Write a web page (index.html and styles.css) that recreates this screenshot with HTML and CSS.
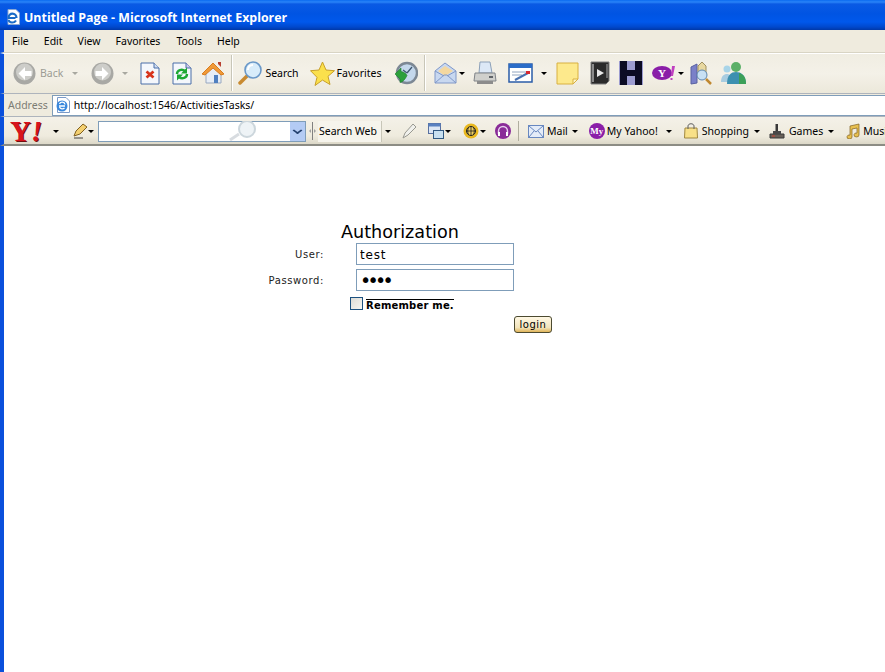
FILE: index.html
```html
<!DOCTYPE html>
<html>
<head>
    <meta charset="utf-8">
    <title>Untitled Page - Microsoft Internet Explorer</title>
    <link rel="stylesheet" href="styles.css">
</head>
<body>
<div class="window">
    <div class="titlebar">
        <svg class="title-icon" width="16" height="16" viewBox="0 0 16 16"><path d="M3 .5h8l3.500 3.500v11.500H3z" fill="#fff" stroke="#8aa8d4"/><path d="M2.500 9h8M3.500 9c0-6 8-5.500 8 0M11 11.500c-2 3-6.500 2.500-7.500-.5" fill="none" stroke="#1a6cc8" stroke-width="2.200"/></svg>
        <span class="title-text">Untitled Page - Microsoft Internet Explorer</span>
    </div>

    <div class="menubar">
        <span class="menu-file">File</span>
        <span class="menu-edit">Edit</span>
        <span class="menu-view">View</span>
        <span class="menu-favorites">Favorites</span>
        <span class="menu-tools">Tools</span>
        <span class="menu-help">Help</span>
    </div>

    <div class="toolbar">
        <svg class="tb-back" width="23" height="23" viewBox="0 0 23 23"><circle cx="11.500" cy="11.500" r="11" fill="#a8a8a4"/><circle cx="11.500" cy="10" r="8.500" fill="#cdcdc9"/><path d="M12 5l-6.500 6.500L12 18v-4h6.500V9H12z" fill="#fff"/></svg>
        <span class="tb-label tb-label-off">Back</span>
        <span class="arrow arrow-off tb-back-arrow"></span>
        <svg class="tb-forward" width="23" height="23" viewBox="0 0 23 23"><circle cx="11.500" cy="11.500" r="11" fill="#a8a8a4"/><circle cx="11.500" cy="10" r="8.500" fill="#cdcdc9"/><path d="M11 5l6.500 6.500L11 18v-4H4.500V9H11z" fill="#fff"/></svg>
        <span class="arrow arrow-off tb-forward-arrow"></span>
        <svg class="tb-stop" width="20" height="23" viewBox="0 0 20 23"><path d="M1 1h13l5 5v16H1z" fill="#f4f7fc" stroke="#4a6fa8"/><path d="M14 1v5h5" fill="#cfdcf0" stroke="#4a6fa8"/><path d="M6.500 9.500l7 6M13.500 9.500l-7 6" stroke="#d8341c" stroke-width="2.800"/></svg>
        <svg class="tb-refresh" width="20" height="23" viewBox="0 0 20 23"><path d="M1 1h13l5 5v16H1z" fill="#f4f7fc" stroke="#4a6fa8"/><path d="M14 1v5h5" fill="#d0c8ec" stroke="#4a6fa8"/><path d="M5 12c0-4 5-5.500 8-3" fill="none" stroke="#1fa834" stroke-width="2.400"/><path d="M15 5.500v6h-6z" fill="#1fa834"/><path d="M15 12c0 4-5 5.500-8 3" fill="none" stroke="#1fa834" stroke-width="2.400"/><path d="M5 18.500v-6h6z" fill="#1fa834"/></svg>
        <svg class="tb-home" width="24" height="24" viewBox="0 0 24 24"><path d="M5 11v11h15V11l-7-7z" fill="#e8eef6" stroke="#98a8c0"/><path d="M1 13L12 2l11 11-3 1-8-7-8 7z" fill="#f09a38" stroke="#d87c20"/><path d="M17 1h3v5l-3-3z" fill="#b84030"/><rect x="13" y="14" width="4" height="8" fill="#5080c0"/></svg>
        <span class="tb-sep tb-sep-a"></span>
        <svg class="tb-search" width="25" height="24" viewBox="0 0 25 24"><path d="M2 22l8-8" stroke="#c88a30" stroke-width="3.500" stroke-linecap="round"/><circle cx="15" cy="9" r="8" fill="#d8ecfa" stroke="#6a98c8" stroke-width="1.600"/><path d="M10 9c0-3 2-5 5-5" fill="none" stroke="#fff" stroke-width="2"/></svg>
        <span class="tb-label tb-search-label">Search</span>
        <svg class="tb-star" width="25" height="25" viewBox="0 0 25 25"><path d="M12.500 1l3.500 8 8.500.7-6.500 5.600 2 8.200-7.500-4.400L5 24.500l2-8.200L.5 9.700 9 9z" fill="#fbe04c" stroke="#c8a028"/></svg>
        <span class="tb-label tb-favorites-label">Favorites</span>
        <svg class="tb-history" width="24" height="24" viewBox="0 0 24 24"><circle cx="13" cy="12" r="10" fill="#c4d8ec" stroke="#7c8894" stroke-width="2.400"/><path d="M13 12l5-6M13 12l-4-3" stroke="#405870" stroke-width="1.300"/><path d="M1 13l6-6v3.500c3 .5 5 2 6 4-2 4-4 6.500-7 7v-3.500z" fill="#2ca03c" stroke="#1c7c2c" stroke-width=".6"/></svg>
        <span class="tb-sep tb-sep-b"></span>
        <svg class="tb-mail" width="23" height="24" viewBox="0 0 23 24"><path d="M1 10L11 2l11 8v12H1z" fill="#c8d8f0" stroke="#8098c8"/><path d="M4 10l7-5 8 5-8 5z" fill="#f4d8a0"/><path d="M1 22l9-8h3l9 8M1 10l9 5M22 10l-9 5" fill="none" stroke="#8098c8"/></svg>
        <span class="arrow tb-mail-arrow"></span>
        <svg class="tb-print" width="24" height="24" viewBox="0 0 24 24"><path d="M7 1h10l2 11H6z" fill="#dce8f6" stroke="#8ca0b8"/><path d="M2 12h20l1 8H1z" fill="#d0d0cc" stroke="#808488"/><path d="M4 20h16v3H4z" fill="#8c8c8c"/><rect x="16" y="15" width="4" height="2" fill="#606468"/></svg>
        <svg class="tb-edit" width="25" height="20" viewBox="0 0 25 20"><rect x="1" y="1" width="23" height="18" fill="#fff" stroke="#2a5ca8" stroke-width="1.500"/><rect x="1" y="1" width="23" height="4" fill="#2a6cc8"/><path d="M4 9h14M4 12h10" stroke="#90a4c0"/><path d="M7 17l13-7" stroke="#4870b0" stroke-width="2"/><rect x="18" y="8" width="4" height="3" fill="#d82830"/></svg>
        <span class="arrow tb-edit-arrow"></span>
        <svg class="tb-note" width="23" height="23" viewBox="0 0 23 23"><path d="M1 1h21v16l-5 5H1z" fill="#fde98c" stroke="#d8b040"/><path d="M17 22v-5h5z" fill="#fff6c8" stroke="#d8b040"/></svg>
        <svg class="tb-film" width="20" height="24" viewBox="0 0 20 24"><path d="M1 1h18v19l-3 3H1z" fill="#2a2a2a" stroke="#808080"/><rect x="2" y="3" width="2" height="18" fill="#8a8a8a"/><rect x="16" y="3" width="2" height="14" fill="#6a6a6a"/><path d="M7 8l7 4-7 4z" fill="#e8e8e8"/></svg>
        <svg class="tb-h" width="24" height="24" viewBox="0 0 24 24"><rect width="24" height="24" fill="#9c9cd0"/><path d="M1 0h7v9h8V0h7v24h-7v-9H8v9H1z" fill="#0c0c24"/></svg>
        <svg class="tb-yahoo" width="24" height="16" viewBox="0 0 24 16"><ellipse cx="10" cy="8" rx="10" ry="7" fill="#8a1ea8"/><text x="10" y="12" class="yahoo-y">Y</text><path d="M20 1h3l-2 10h-2zM18.500 13h2v2h-2z" fill="#c040c0"/></svg>
        <span class="arrow tb-yahoo-arrow"></span>
        <svg class="tb-research" width="22" height="24" viewBox="0 0 22 24"><path d="M1 6l6-3v19l-6 1z" fill="#7a80c8" stroke="#5860a0"/><path d="M8 5l4-4 4 4v10H8z" fill="#e8d8a0" stroke="#a09060"/><circle cx="12" cy="14" r="5" fill="#c8e0f4" stroke="#6088b0"/><path d="M16 18l5 5" stroke="#c08830" stroke-width="2.500"/></svg>
        <svg class="tb-messenger" width="25" height="24" viewBox="0 0 25 24"><circle cx="6" cy="8" r="3.500" fill="#a8d4e8"/><path d="M0 21c0-6 3-8 6-8s4 2 5 8z" fill="#a8cce0"/><circle cx="15" cy="6" r="5" fill="#5cb068"/><path d="M6 23c0-9 4-12 9-12s10 3 10 12z" fill="#3c90b0"/><path d="M18 12c4 1 7 4 7 11h-7z" fill="#3ca058"/></svg>
    </div>

    <div class="addressbar">
        <span class="address-label">Address</span>
        <div class="address-box">
            <svg class="address-icon" width="16" height="16" viewBox="0 0 16 16"><path d="M2.500 .5h8.500l3.500 3.500v11.500h-12z" fill="#fff" stroke="#7a9ac8"/><circle cx="7" cy="9" r="5.500" fill="#3a88dc"/><path d="M4 9h6M4.500 7c1-2.500 5-2.500 5.500.5M9.500 11c-1.500 1.500-4 1.200-5-1" fill="none" stroke="#fff" stroke-width="1.300"/></svg>
            <span class="address-url">http://localhost:1546/ActivitiesTasks/</span>
        </div>
    </div>

    <div class="yahoobar">
        <span class="yahoo-logo">Y<i class="yahoo-bang">!</i></span>
        <span class="arrow yb-logo-arrow"></span>
        <svg class="yb-pencil" width="15" height="16" viewBox="0 0 15 16"><path d="M1 13l2-5 7-7 4 3-7 7z" fill="#f4d070" stroke="#806020"/><path d="M1 15h9" stroke="#404040"/></svg>
        <span class="arrow yb-pencil-arrow"></span>
        <div class="search-box">
            <svg class="search-glass" width="28" height="20" viewBox="0 0 28 20"><path d="M1 19l9-6" stroke="#d8dce0" stroke-width="3"/><circle cx="18" cy="8" r="8" fill="#eef3f6" stroke="#ccd6dc" stroke-width="2"/></svg>
            <span class="search-drop"></span>
        </div>
        <svg class="yb-grip" width="7" height="20" viewBox="0 0 7 20"><path d="M3.500 1v18" stroke="#808080"/><path d="M2 8l-2 2 2 2zM5 8l2 2-2 2z" fill="#a0a0a0"/></svg>
        <span class="search-web">Search Web</span>
        <span class="arrow yb-web-arrow"></span>
        <svg class="yb-pen" width="15" height="16" viewBox="0 0 15 16"><path d="M1 15l2-5 8-9 3 3-8 8z" fill="#f0f0ec" stroke="#989890"/></svg>
        <svg class="yb-window" width="16" height="16" viewBox="0 0 16 16"><rect x="0.500" y="0.500" width="12" height="10" fill="#dce6f4" stroke="#5870a0"/><rect x="0.500" y="0.500" width="12" height="3" fill="#5880c0"/><rect x="5.500" y="7.500" width="10" height="8" fill="#c8e0f0" stroke="#305880"/></svg>
        <span class="arrow yb-window-arrow"></span>
        <svg class="yb-globe" width="16" height="16" viewBox="0 0 16 16"><circle cx="8" cy="8" r="7.500" fill="#e8b820"/><circle cx="8" cy="8" r="4.500" fill="#f0d060" stroke="#202020"/><path d="M3.500 8h9M8 3.500v9M5.500 4.500c-1 2-1 5 0 7M10.500 4.500c1 2 1 5 0 7" fill="none" stroke="#202020" stroke-width=".8"/></svg>
        <span class="arrow yb-globe-arrow"></span>
        <svg class="yb-phones" width="16" height="16" viewBox="0 0 16 16"><circle cx="8" cy="8" r="8" fill="#8a2c98"/><path d="M3.500 11V8a4.500 4.500 0 0 1 9 0v3" fill="none" stroke="#e8d0f0" stroke-width="1.400"/><rect x="3" y="9" width="2" height="4" fill="#fff"/><rect x="11" y="9" width="2" height="4" fill="#fff"/></svg>
        <span class="yb-sep"></span>
        <svg class="yb-mail" width="16" height="13" viewBox="0 0 16 13"><rect x="0.500" y="0.500" width="15" height="12" fill="#e4ecf8" stroke="#6888c0"/><path d="M1 1l7 6 7-6M1 12l5-6M15 12l-5-6" fill="none" stroke="#6888c0"/></svg>
        <span class="yb-label yb-mail-label">Mail</span>
        <span class="arrow yb-mail-arrow"></span>
        <span class="my-badge">My</span>
        <span class="yb-label yb-my-label">My Yahoo!</span>
        <span class="arrow yb-my-arrow"></span>
        <svg class="yb-shop" width="14" height="16" viewBox="0 0 14 16"><path d="M1 5h12l.5 10H.5z" fill="#f8e088" stroke="#a08840"/><path d="M4 6V3c0-3 6-3 6 0v3" fill="none" stroke="#606060"/></svg>
        <span class="yb-label yb-shop-label">Shopping</span>
        <span class="arrow yb-shop-arrow"></span>
        <svg class="yb-games" width="16" height="16" viewBox="0 0 16 16"><path d="M1 11h14v4H1z" fill="#686058" stroke="#383838"/><rect x="6.500" y="1" width="2.500" height="10" fill="#383838"/><rect x="4" y="8" width="8" height="3" fill="#484848"/><rect x="3" y="12.500" width="3" height="1" fill="#d04030"/></svg>
        <span class="yb-label yb-games-label">Games</span>
        <span class="arrow yb-games-arrow"></span>
        <svg class="yb-music" width="15" height="16" viewBox="0 0 15 16"><path d="M5 3l9-2v11a2.500 2 0 1 1-2-2V5L7 6v8a2.500 2 0 1 1-2-2z" fill="#e8c050" stroke="#806020" stroke-width=".7"/></svg>
        <span class="yb-label yb-music-label">Music</span>
    </div>

    <div class="page">
        <form class="login">
            <h1 class="login-title">Authorization</h1>
            <div class="login-row">
                <label class="login-label">User:</label>
                <input class="login-input" type="text" value="test">
            </div>
            <div class="login-row">
                <label class="login-label">Password:</label>
                <input class="login-input login-pass" type="password" value="test">
            </div>
            <div class="remember">
                <span class="remember-box"></span>
                <span class="remember-text">Remember me.</span>
            </div>
            <div class="login-actions">
                <button class="login-btn" type="button">login</button>
            </div>
        </form>
    </div>
</div>
</body>
</html>
```

FILE: styles.css
```css
html, body {
    margin: 0;
    padding: 0;
    height: 100%;
    overflow: hidden;
}

body {
    font-family: "Noto Sans", "Open Sans", sans-serif;
    font-size: 10.500px;
    color: #000;
    background-color: #fff;
}

svg {
    flex: none;
    display: block;
}

.window {
    display: flex;
    flex-direction: column;
    width: 885px;
    height: 672px;
    overflow: hidden;
}

/* title bar */
.titlebar {
    display: flex;
    align-items: center;
    height: 30px;
    box-sizing: border-box;
    flex: none;
    padding: 4px 0 0 5px;
    background: linear-gradient(#0a6af0 0, #2a84f8 2px, #0a5ae4 4px, #0054e3 14px, #0058ec 22px, #0048cc 27px, #0038a8 30px);
}

.title-text {
    margin-left: 3px;
    color: #fff;
    font-family: "Open Sans", sans-serif;
    font-weight: 700;
    font-size: 12.400px;
    white-space: nowrap;
}

/* menu */
.menubar, .toolbar, .addressbar, .yahoobar {
    display: flex;
    align-items: center;
    flex: none;
    box-sizing: border-box;
    border-left: 4px solid #0a50dc;
    background-color: #efebde;
    white-space: nowrap;
}

.menubar {
    height: 23px;
    padding-bottom: 1px;
    border-bottom: 1px solid #d8d4c4;
}

.menu-file { margin-left: 8px; }
.menu-edit { margin-left: 15px; }
.menu-view { margin-left: 15px; }
.menu-favorites { margin-left: 15px; }
.menu-tools { margin-left: 16px; }
.menu-help { margin-left: 15px; }

/* main toolbar */
.toolbar {
    height: 41px;
    padding-bottom: 1px;
    border-top: 1px solid #fff;
    border-bottom: 1px solid #aeb4bc;
    background: linear-gradient(#f0ede2, #f4f1e8 50%, #ece8da);
}

.tb-label-off { margin-left: 4px; color: #9c9c94; }

.arrow {
    flex: none;
    width: 0;
    height: 0;
    border-left: 3px solid transparent;
    border-right: 3px solid transparent;
    border-top: 3px solid #000;
}

.arrow-off { border-top-color: #a8a8a0; }

.tb-back { margin-left: 9px; }
.tb-back-arrow { margin-left: 9px; }
.tb-forward { margin-left: 13px; }
.tb-forward-arrow { margin-left: 8px; }
.tb-stop { margin-left: 12px; }
.tb-refresh { margin-left: 12px; }
.tb-home { margin-left: 9px; }

.tb-sep {
    flex: none;
    width: 1px;
    height: 36px;
    background-color: #c8c6b8;
    border-right: 1px solid #fff;
}

.tb-sep-a { margin-left: 6px; }
.tb-search { margin-left: 5px; }
.tb-search-label { margin-left: 2px; }
.tb-star { margin-left: 11px; }
.tb-favorites-label { margin-left: 2px; }
.tb-history { margin-left: 13px; }
.tb-sep-b { margin-left: 6px; }
.tb-mail { margin-left: 8px; }
.tb-mail-arrow { margin-left: 2px; }
.tb-print { margin-left: 8px; }
.tb-edit { margin-left: 11px; }
.tb-edit-arrow { margin-left: 8px; }
.tb-note { margin-left: 9px; }
.tb-film { margin-left: 11px; }
.tb-h { margin-left: 9px; }
.tb-yahoo { margin-left: 9px; }
.tb-yahoo-arrow { margin-left: 2px; }
.tb-research { margin-left: 6px; }
.tb-messenger { margin-left: 9px; }

.yahoo-y {
    font-family: "Liberation Serif", serif;
    font-weight: 700;
    font-size: 11px;
    fill: #fff;
    text-anchor: middle;
}

/* address */
.addressbar {
    height: 23px;
    border-bottom: 1px solid #aeb4bc;
}

.address-label {
    margin-left: 4px;
    color: #7c7c74;
}

.address-box {
    display: flex;
    align-items: center;
    flex: 1;
    height: 21px;
    box-sizing: border-box;
    margin-left: 4px;
    background-color: #fff;
    border: 1px solid #7f9db9;
    border-right: none;
}

.address-icon { margin-left: 2px; }

.address-url {
    margin-left: 3px;
}

/* yahoo toolbar */
.yahoobar {
    height: 29px;
    padding-top: 1px;
    border-bottom: 2px solid #8c8c84;
    background: linear-gradient(#f4f1e8, #efebde 70%, #dcd8c8);
}

.yahoo-logo {
    flex: none;
    width: 32px;
    margin-left: 6px;
    color: #d8141c;
    font-family: "Liberation Serif", serif;
    font-weight: 700;
    font-size: 29px;
    line-height: 24px;
    text-shadow: 1px 1px 0 #701010;
}

.yahoo-bang { font-style: italic; }

.yb-logo-arrow { margin-left: 11px; }
.yb-pencil { margin-left: 14px; }
.yb-pencil-arrow { margin-left: 0; }

.search-box {
    display: flex;
    align-items: center;
    justify-content: flex-end;
    flex: none;
    width: 208px;
    height: 21px;
    box-sizing: border-box;
    margin-left: 4px;
    background-color: #fff;
    border: 1px solid #7f9db9;
}

.search-glass { margin-right: 33px; }

.search-drop {
    flex: none;
    position: relative;
    width: 15px;
    height: 19px;
    background-color: #b4cbf4;
}

.search-drop::after {
    content: "";
    position: absolute;
    left: 4px;
    top: 5px;
    width: 5px;
    height: 5px;
    border-right: 2px solid #23406e;
    border-bottom: 2px solid #23406e;
    transform: scale(1, .7) rotate(45deg);
}

.yb-grip { margin-left: 3px; }

.search-web {
    flex: none;
    width: 64px;
    height: 21px;
    margin-left: 2px;
    line-height: 21px;
    box-sizing: border-box;
    padding-left: 1px;
    background-color: #f6f4ec;
    border-right: 1px solid #c8c6b8;
}

.yb-web-arrow { margin-left: 3px; }
.yb-pen { margin-left: 11px; }
.yb-window { margin-left: 11px; }
.yb-window-arrow { margin-left: 1px; }
.yb-globe { margin-left: 12px; }
.yb-globe-arrow { margin-left: 1px; }
.yb-phones { margin-left: 9px; }

.yb-sep {
    flex: none;
    width: 1px;
    height: 20px;
    margin-left: 7px;
    background-color: #b0ae9f;
}

.yb-mail { margin-left: 9px; }
.yb-mail-label { margin-left: 3px; }
.yb-mail-arrow { margin-left: 4px; }

.my-badge {
    flex: none;
    width: 16px;
    height: 16px;
    margin-left: 11px;
    border-radius: 50%;
    background-color: #8a1ea8;
    color: #fff;
    font-family: "Liberation Serif", serif;
    font-weight: 700;
    font-size: 9px;
    line-height: 16px;
    text-align: center;
}

.yb-my-label { margin-left: 2px; }
.yb-my-arrow { margin-left: 8px; }
.yb-shop { margin-left: 12px; }
.yb-shop-label { margin-left: 4px; }
.yb-shop-arrow { margin-left: 5px; }
.yb-games { margin-left: 9px; }
.yb-games-label { margin-left: 4px; }
.yb-games-arrow { margin-left: 5px; }
.yb-music { margin-left: 11px; }
.yb-music-label { margin-left: 3px; }

/* page */
.page {
    flex: 1;
    border-left: 4px solid #0a50dc;
    background-color: #fff;
    font-family: "DejaVu Sans", sans-serif;
}

.login {
    width: 300px;
    margin-left: 260px;
    padding-top: 75px;
}

.login-title {
    margin: 0 0 0 77px;
    font-weight: 400;
    font-size: 17.600px;
    line-height: 22px;
}

.login-row {
    display: flex;
    align-items: center;
    margin-bottom: 4px;
}

.login-label {
    width: 60px;
    text-align: right;
    font-size: 10px;
    letter-spacing: .6px;
    color: #222;
}

.login-input {
    width: 158px;
    height: 22px;
    box-sizing: border-box;
    margin: 0 0 0 32px;
    padding: 1px 3px 0;
    border: 1px solid #7f9db9;
    border-radius: 0;
    outline: none;
    font-family: "DejaVu Sans", sans-serif;
    font-size: 12px;
    letter-spacing: .8px;
}

.login-pass {
    padding-top: 0;
    font-size: 19px;
    letter-spacing: -3.700px;
}

.remember {
    display: flex;
    align-items: flex-start;
    margin-left: 86px;
    margin-top: 6px;
}

.remember-box {
    flex: none;
    width: 11px;
    height: 11px;
    border: 1px solid #1c5180;
    background: linear-gradient(135deg, #dcdcd7, #f6f6f2);
}

.remember-text {
    margin: 2px 0 0 3px;
    border-top: 1px solid #000;
    font-weight: 700;
    font-size: 10px;
    line-height: 11px;
    letter-spacing: .2px;
    white-space: nowrap;
}

.login-actions {
    margin-left: 250px;
    margin-top: 5px;
}

.login-btn {
    display: block;
    width: 38px;
    height: 17px;
    padding: 0;
    border: 1px solid #4c4a30;
    border-radius: 3px;
    background: linear-gradient(#fff8e4, #f2e4bc 70%, #e0b458);
    font-family: "DejaVu Sans", sans-serif;
    font-size: 10px;
    letter-spacing: .5px;
    color: #000;
}
```
